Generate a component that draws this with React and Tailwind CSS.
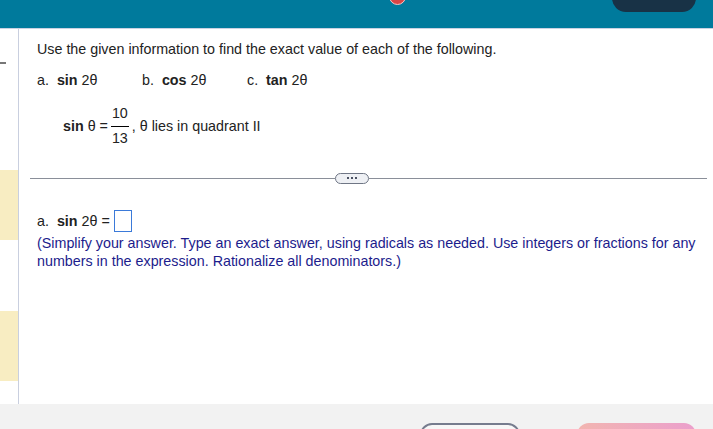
import React from 'react';

// Textbook-style exercise page: teal top bar, left rail, question body, footer bar.
const font = { fontFamily: '"Liberation Sans", Arial, sans-serif' };

const Fraction = ({ top, bottom }) => (
  <span className="inline-flex flex-col items-center align-middle mx-[3px] leading-none">
    <span className="px-[1px] pb-[6px]">{top}</span>
    <span className="w-full border-t border-black" />
    <span className="px-[1px] pb-[2px] pt-[4px]">{bottom}</span>
  </span>
);

const App = () => {
  return (
    <div className="flex h-[429px] w-[713px] flex-col overflow-hidden bg-white text-[14.3px] text-[#222]" style={font}>
      {/* Top bar */}
      <header className="relative h-[29px] shrink-0 border-b border-[#c9d1e2] bg-[#007a9c]">
        <span className="absolute left-[389px] top-[-12px] h-[17px] w-[17px] rounded-full border border-[#f0c9c9] bg-[#d94545]" />
        <span className="absolute left-[612px] top-[-10px] h-[22px] w-[84px] rounded-b-[14px] bg-[#183246]" />
      </header>

      <div className="flex min-h-0 flex-1">
        {/* Left rail */}
        <aside className="relative w-[19px] shrink-0 border-r border-[#c9cfdf]">
          <span className="absolute left-0 top-[33px] h-[2px] w-[6px] bg-[#777]" />
          <span className="absolute left-0 top-[141px] h-[70px] w-[18px] bg-[#f8edc2]" />
          <span className="absolute left-0 top-[282px] h-[70px] w-[18px] bg-[#f8edc2]" />
        </aside>

        {/* Question body */}
        <main className="flex-1 pr-[6px]">
          <p className="ml-[18px] mt-[12px] leading-[16px]">
            Use the given information to find the exact value of each of the following.
          </p>

          <div className="ml-[18px] mt-[15px] flex leading-[16px]">
            <span className="w-[105px]">a.&nbsp;&nbsp;<b>sin</b> 2θ</span>
            <span className="w-[105px]">b.&nbsp;&nbsp;<b>cos</b> 2θ</span>
            <span>c.&nbsp;&nbsp;<b>tan</b> 2θ</span>
          </div>

          <div className="ml-[44px] mt-[18px] flex items-center">
            <span><b>sin</b> θ =</span>
            <Fraction top="10" bottom="13" />
            <span>, θ lies in quadrant II</span>
          </div>

          <div className="ml-[11px] mt-[25px] flex items-center">
            <span className="h-px w-[305px] bg-[#8a8f99]" />
            <span className="flex h-[11px] w-[34px] items-center justify-center gap-[2px] rounded-full border border-[#6f7685] bg-[#eef0f4]">
              <span className="h-[2px] w-[2px] bg-[#4b5263]" />
              <span className="h-[2px] w-[2px] bg-[#4b5263]" />
              <span className="h-[2px] w-[2px] bg-[#4b5263]" />
            </span>
            <span className="h-px flex-1 bg-[#8a8f99]" />
          </div>

          <div className="ml-[18px] mt-[26px] flex items-center leading-[16px]">
            <span>a.&nbsp;&nbsp;<b>sin</b> 2θ =</span>
            <span className="ml-[4px] h-[22px] w-[18px] border border-[#3b7ad9]" />
          </div>

          <p className="ml-[18px] mt-[2px] leading-[18px] text-[#1c1c8c]">
            (Simplify your answer. Type an exact answer, using radicals as needed. Use integers or fractions for any
            numbers in the expression. Rationalize all denominators.)
          </p>
        </main>
      </div>

      {/* Footer bar */}
      <footer className="relative h-[25px] shrink-0 bg-[#f2f2f2]">
        <span className="absolute left-[420px] top-[19px] h-[24px] w-[100px] rounded-[12px] border-2 border-[#767c8e] bg-[#f7f7f7]" />
        <span className="absolute left-[577px] top-[19px] h-[24px] w-[119px] rounded-[12px] bg-gradient-to-r from-[#f2b5b0] to-[#eb9fcc]" />
      </footer>
    </div>
  );
};

export default App;
